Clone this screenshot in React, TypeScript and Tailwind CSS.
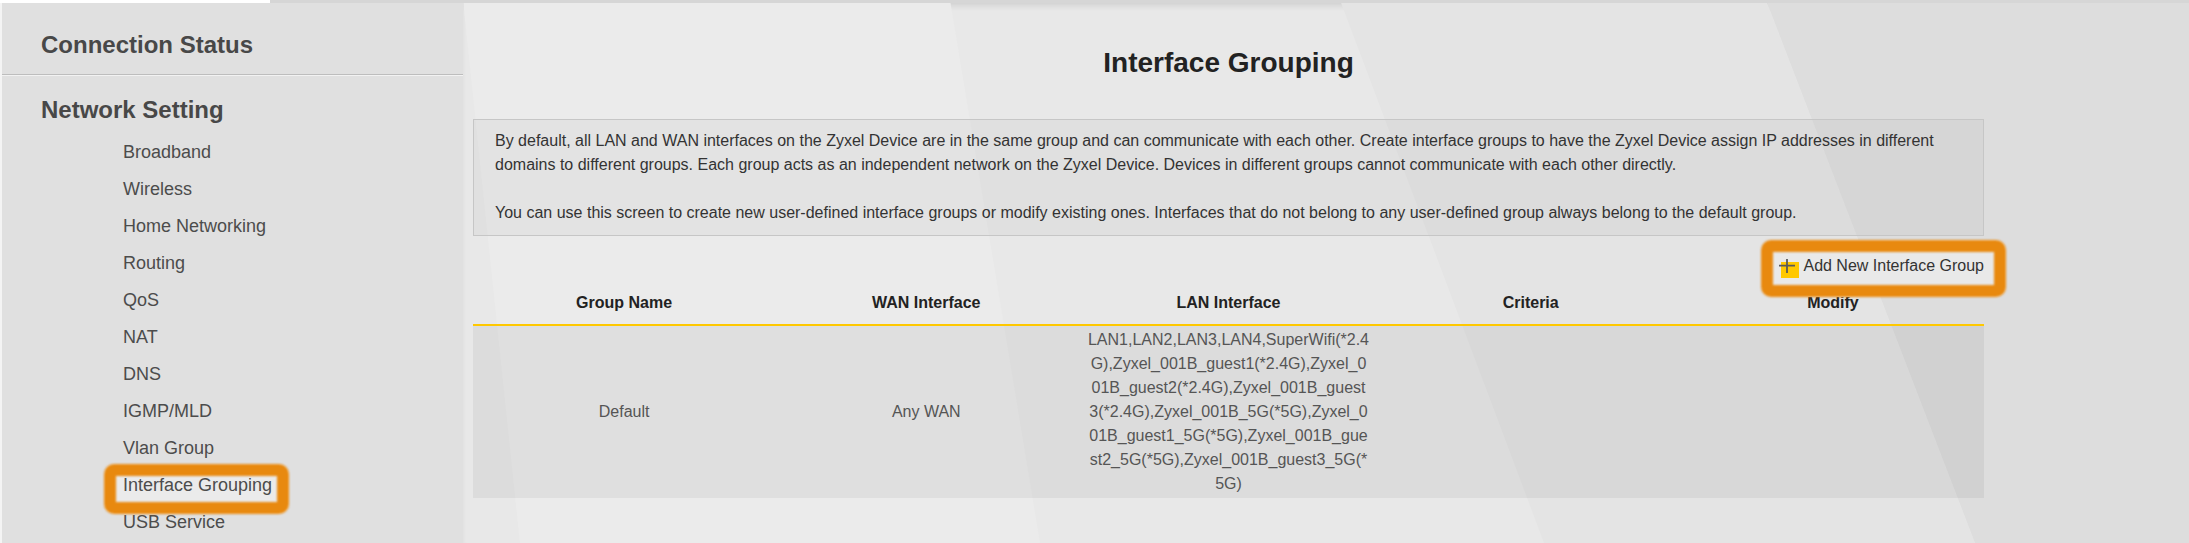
import React from "react";

const navItems = [
  "Broadband",
  "Wireless",
  "Home Networking",
  "Routing",
  "QoS",
  "NAT",
  "DNS",
  "IGMP/MLD",
  "Vlan Group",
  "Interface Grouping",
  "USB Service",
];

const lanLines = [
  "LAN1,LAN2,LAN3,LAN4,SuperWifi(*2.4",
  "G),Zyxel_001B_guest1(*2.4G),Zyxel_0",
  "01B_guest2(*2.4G),Zyxel_001B_guest",
  "3(*2.4G),Zyxel_001B_5G(*5G),Zyxel_0",
  "01B_guest1_5G(*5G),Zyxel_001B_gue",
  "st2_5G(*5G),Zyxel_001B_guest3_5G(*",
  "5G)",
];

function Highlight({ className }: { className: string }) {
  return (
    <span
      className={`pointer-events-none absolute rounded-[10px] border-[12px] border-[#e8890f] blur-[1px] ${className}`}
    />
  );
}

export default function App() {
  return (
    <div className="w-[2189px] h-[543px] overflow-hidden bg-white flex flex-col font-['Liberation_Sans',Arial,sans-serif]">
      {/* top strip */}
      <div className="h-[3px] flex shrink-0">
        <div className="w-[270px] bg-white" />
        <div className="flex-1 bg-[#d6d6d6]" />
      </div>

      <div className="flex flex-1 min-h-0">
        <div className="w-[2px] bg-[#f4f4f4] shrink-0" />

        {/* Sidebar */}
        <aside className="w-[461px] shrink-0 bg-[#e0e0e0] flex flex-col">
          <div className="pt-[28px] pb-[15px] pl-[39px] text-[24px] leading-[28px] font-bold text-[#484848] border-b border-[#bdbdbd] shadow-[0_1px_0_#f2f2f2]">
            Connection Status
          </div>
          <div className="pt-[21px] pl-[39px] text-[24px] leading-[28px] font-bold text-[#484848]">
            Network Setting
          </div>
          <ul className="mt-[10px] pl-[121px] text-[18px] text-[#4c4c4c]">
            {navItems.map((item) => (
              <li key={item} className="h-[37px] leading-[37px]">
                {item === "Interface Grouping" ? (
                  <span className="relative inline-block">
                    <span className="absolute left-[-19px] top-[-3px] w-[185px] h-[50px] rounded-[10px] bg-[#ebebeb]" />
                    <Highlight className="left-[-19px] top-[-3px] w-[185px] h-[50px]" />
                    <span className="relative">{item}</span>
                  </span>
                ) : (
                  item
                )}
              </li>
            ))}
          </ul>
        </aside>

        {/* Main */}
        <main className="relative flex-1 bg-[#e8e8e8] shadow-[inset_0_5px_7px_-3px_rgba(0,0,0,0.12)]">
          <svg
            className="absolute inset-0 pointer-events-none"
            width="1726"
            height="540"
            viewBox="463 3 1726 540"
          >
            <polygon points="463,0 950,0 1040,543 520,543" fill="#ebebeb" />
            <polygon points="1340,0 1766,0 1975,543 1544,543" fill="#e4e4e4" />
            <polygon points="1766,0 2189,0 2189,543 1975,543" fill="#dddddd" />
          </svg>

          <div className="relative w-[1511px] ml-[10px] flex flex-col">
            <h1 className="mt-[44px] text-center text-[28px] leading-[32px] font-bold text-[#222]">
              Interface Grouping
            </h1>

            <div className="mt-[40px] border border-[#c6c6c6] bg-black/[0.03] pt-[9px] pb-[10px] pl-[21px] text-[16px] leading-[24px] text-[#333]">
              <p>
                By default, all LAN and WAN interfaces on the Zyxel Device are in the same group and can communicate with each other. Create interface groups to have the Zyxel Device assign IP addresses in different
                <br />
                domains to different groups. Each group acts as an independent network on the Zyxel Device. Devices in different groups cannot communicate with each other directly.
              </p>
              <p className="mt-[24px]">
                You can use this screen to create new user-defined interface groups or modify existing ones. Interfaces that do not belong to any user-defined group always belong to the default group.
              </p>
            </div>

            <div className="mt-[18px] h-[24px] flex justify-end">
              <div className="relative flex items-center h-[24px] text-[16px] leading-[24px] text-[#333]">
                <span className="absolute left-[-17px] top-[-14px] w-[245px] h-[57px] rounded-[10px] bg-[#e9e9e9]" />
                <Highlight className="left-[-17px] top-[-14px] w-[245px] h-[57px]" />
                <svg className="relative" width="21" height="24" viewBox="0 0 21 24">
                  <rect x="3" y="8" width="18" height="16" fill="#ffc800" />
                  <path d="M1 11.7H17M9 5V19" stroke="#5a5a5a" strokeWidth="1.8" />
                </svg>
                <span className="relative ml-[4px]">Add New Interface Group</span>
              </div>
            </div>

            <div className="mt-[4px] h-[42px] grid grid-cols-5 items-center border-b-2 border-[#ffc800] text-[16px] font-bold text-[#222] text-center box-content">
              <div>Group Name</div>
              <div>WAN Interface</div>
              <div>LAN Interface</div>
              <div>Criteria</div>
              <div>Modify</div>
            </div>

            <div className="h-[172px] grid grid-cols-5 items-center bg-black/[0.05] text-[16px] leading-[24px] text-[#555] text-center">
              <div>Default</div>
              <div>Any WAN</div>
              <div className="whitespace-nowrap">
                {lanLines.map((l, i) => (
                  <div key={i}>{l}</div>
                ))}
              </div>
              <div />
              <div />
            </div>
          </div>
        </main>
      </div>
    </div>
  );
}
